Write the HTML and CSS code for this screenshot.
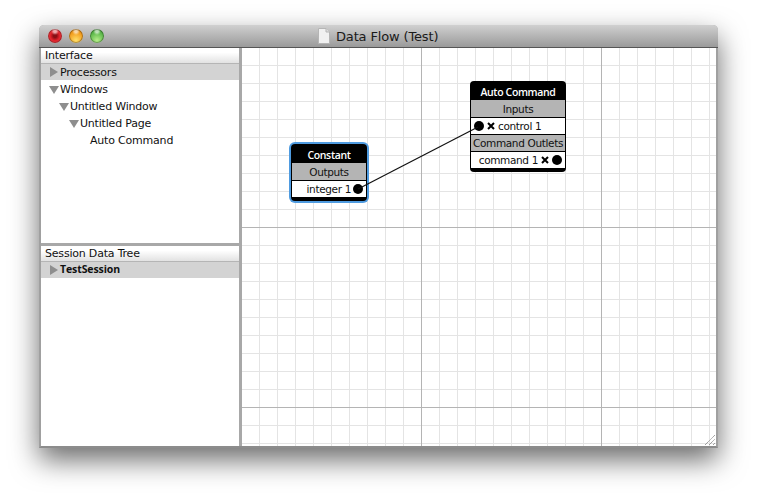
FILE: index.html
```html
<!DOCTYPE html>
<html lang="en">
<head>
<meta charset="utf-8">
<title>Data Flow (Test)</title>
<link rel="stylesheet" href="styles.css">
</head>
<body>
<div class="window">
  <header class="titlebar">
    <div class="lights">
      <span class="light red"></span>
      <span class="light orange"></span>
      <span class="light green"></span>
    </div>
    <div class="title">
      <svg class="doc" width="12" height="16" viewBox="0 0 12 16"><path d="M.5.5H8L11.5 4V15.5H.5Z" fill="#f1f1f1" stroke="#b5b5b5"/><path d="M8 .5V4H11.5" fill="#dcdcdc" stroke="#b5b5b5"/></svg>
      <span>Data Flow (Test)</span>
    </div>
  </header>
  <div class="body">
    <aside class="sidebar">
      <section class="pane pane-top">
        <h2 class="pane-head">Interface</h2>
        <div class="row sel d0"><i class="tri right"></i>Processors</div>
        <div class="row d0b"><i class="tri down"></i>Windows</div>
        <div class="row d1"><i class="tri down"></i>Untitled Window</div>
        <div class="row d2"><i class="tri down"></i>Untitled Page</div>
        <div class="row d3">Auto Command</div>
      </section>
      <section class="pane pane-bottom">
        <h2 class="pane-head">Session Data Tree</h2>
        <div class="row sel d0 strong"><i class="tri right"></i><span class="strong-text">TestSession</span></div>
      </section>
    </aside>
    <main class="canvas">
      <svg class="wire" width="474" height="398"><line x1="116" y1="141" x2="236" y2="79" stroke="#111" stroke-width="1.2"/></svg>
      <div class="node constant">
        <div class="node-title">Constant</div>
        <div class="node-sec">Outputs</div>
        <div class="node-port end">integer 1<b class="dot"></b></div>
      </div>
      <div class="node command">
        <div class="node-title">Auto Command</div>
        <div class="node-sec">Inputs</div>
        <div class="node-port start"><b class="dot"></b><svg class="x" width="8" height="8" viewBox="0 0 8 8"><path d="M1 1 7 7M7 1 1 7" stroke="#000" stroke-width="2"/></svg>control 1</div>
        <div class="node-sec">Command Outlets</div>
        <div class="node-port end">command 1<svg class="x" width="8" height="8" viewBox="0 0 8 8"><path d="M1 1 7 7M7 1 1 7" stroke="#000" stroke-width="2"/></svg><b class="dot"></b></div>
      </div>
      <svg class="grip" width="12" height="12" viewBox="0 0 12 12"><path d="M1 11 11 1M5 11 11 5M9 11 11 9" stroke="#7a7a7a" stroke-width="1" stroke-dasharray="1 .6" fill="none"/></svg>
    </main>
  </div>
</div>
</body>
</html>
```
FILE: styles.css
```css
html, body { margin: 0; height: 100%; background: #fff; }
body { padding: 25px 39px 0; box-sizing: border-box; overflow: hidden; font-family: "DejaVu Sans", sans-serif; font-size: 11px; color: #111; }
.window { width: 679px; height: 423px; display: flex; flex-direction: column; border-radius: 5px 5px 0 0; box-shadow: 0 12px 28px rgba(0,0,0,.58); background: #a8a8a8; }
.titlebar { height: 23px; flex: none; display: flex; align-items: center; position: relative; border-radius: 5px 5px 0 0; background: linear-gradient(#d0d0d0, #9a9a9a); border-bottom: 1px solid #555; box-sizing: border-box; }
.lights { display: flex; gap: 7px; padding-left: 9px; }
.light { width: 14px; height: 14px; border-radius: 50%; box-shadow: inset 0 0 0 1px rgba(0,0,0,.3); }
.red { background: radial-gradient(circle at 50% 16%, rgba(255,255,255,.6) 0 10%, transparent 28%), radial-gradient(circle at 50% 50%, #8a0f14 0 16%, #e0222a 46%, #f4585c 100%); }
.orange { background: radial-gradient(circle at 50% 16%, rgba(255,255,255,.6) 0 10%, transparent 28%), radial-gradient(circle at 50% 80%, #ffe06a, #f29c1c 60%, #d27c10); }
.green { background: radial-gradient(circle at 50% 16%, rgba(255,255,255,.6) 0 10%, transparent 28%), radial-gradient(circle at 50% 80%, #b6ee8a, #5cb84a 60%, #3b8f30); }
.title { position: absolute; left: 279px; top: 3px; display: flex; align-items: center; gap: 6px; font-size: 13px; color: #1a1a1a; letter-spacing: -.15px; }
.body { flex: 1; display: flex; min-height: 0; border: solid #a0a0a0; border-width: 0 2px; border-bottom: 2px solid #8c8c8c; }
.sidebar { width: 198px; flex: none; display: flex; flex-direction: column; letter-spacing: -.2px; }
.pane { background: #fff; }
.pane-top { height: 195px; }
.pane-bottom { flex: 1; margin-top: 3px; }
.pane-head { margin: 0; height: 16px; line-height: 15px; padding-left: 4px; font-size: 11px; font-weight: 400; box-sizing: border-box; background: linear-gradient(#fff 30%, #e2e2e2); border-bottom: 1px solid #b5b5b5; }
.row { height: 17px; line-height: 17px; display: flex; align-items: center; white-space: nowrap; }
.sel { background: #d3d3d3; height: 16px; margin-bottom: 1px; }
.strong { font-family: "Open Sans", sans-serif; font-weight: 700; font-size: 10.5px; letter-spacing: -.1px; }
.strong-text { line-height: 12px; padding-bottom: 3px; }
.d0 { padding-left: 10px; }
.d0b { padding-left: 8px; }
.d1 { padding-left: 18px; }
.d2 { padding-left: 28px; }
.d3 { padding-left: 49px; }
.tri { width: 0; height: 0; flex: none; margin-right: 1px; }
.tri.right { border-left: 8px solid #8e8e8e; border-top: 5px solid transparent; border-bottom: 5px solid transparent; margin-right: 2px; margin-left: -1px; }
.tri.down { border-top: 8px solid #8e8e8e; border-left: 5px solid transparent; border-right: 5px solid transparent; }
.canvas { flex: 1; position: relative; margin-left: 3px; overflow: hidden; background-color: #fff;
  background-image:
    linear-gradient(#b4b4b4 1px, transparent 1px),
    linear-gradient(90deg, #b4b4b4 1px, transparent 1px),
    linear-gradient(#e4e4e4 1px, transparent 1px),
    linear-gradient(90deg, #e4e4e4 1px, transparent 1px);
  background-size: 180px 180px, 180px 180px, 18px 18px, 18px 18px;
  background-position: -1px -1px; }
.wire { position: absolute; left: 0; top: 0; z-index: 2; }
.node { position: absolute; background: #000; border-radius: 4px; padding-bottom: 4px; box-sizing: border-box; text-align: center; font-size: 10.5px; letter-spacing: -.35px; }
.constant { left: 49px; top: 96px; width: 76px; box-shadow: 0 0 0 2px #4f9be0; }
.command { left: 228px; top: 33px; width: 96px; }
.node-title { height: 19px; line-height: 22px; color: #fff; font-family: "Open Sans", sans-serif; font-weight: 600; font-size: 10.5px; letter-spacing: -.35px; }
.node-sec { height: 18px; line-height: 19px; background: #b4b4b4; border-bottom: 1px solid #000; margin: 0 1px; box-sizing: border-box; color: #111; white-space: nowrap; }
.node-port { height: 16px; line-height: 16px; background: #fff; margin: 0 1px; display: flex; align-items: center; white-space: nowrap; }
.node-port.end { justify-content: flex-end; padding-right: 3px; }
.node-port.start { padding-left: 3px; }
.node-port + .node-sec { border-top: 1px solid #000; line-height: 16px; }
.dot { width: 10px; height: 10px; border-radius: 50%; background: #000; flex: none; margin-left: 2px; }
.start .dot { margin: 0; }
.x { flex: none; margin: 0 3px; }
.end .x { margin-right: 1px; }
.grip { position: absolute; right: 0; bottom: 0; }
```
